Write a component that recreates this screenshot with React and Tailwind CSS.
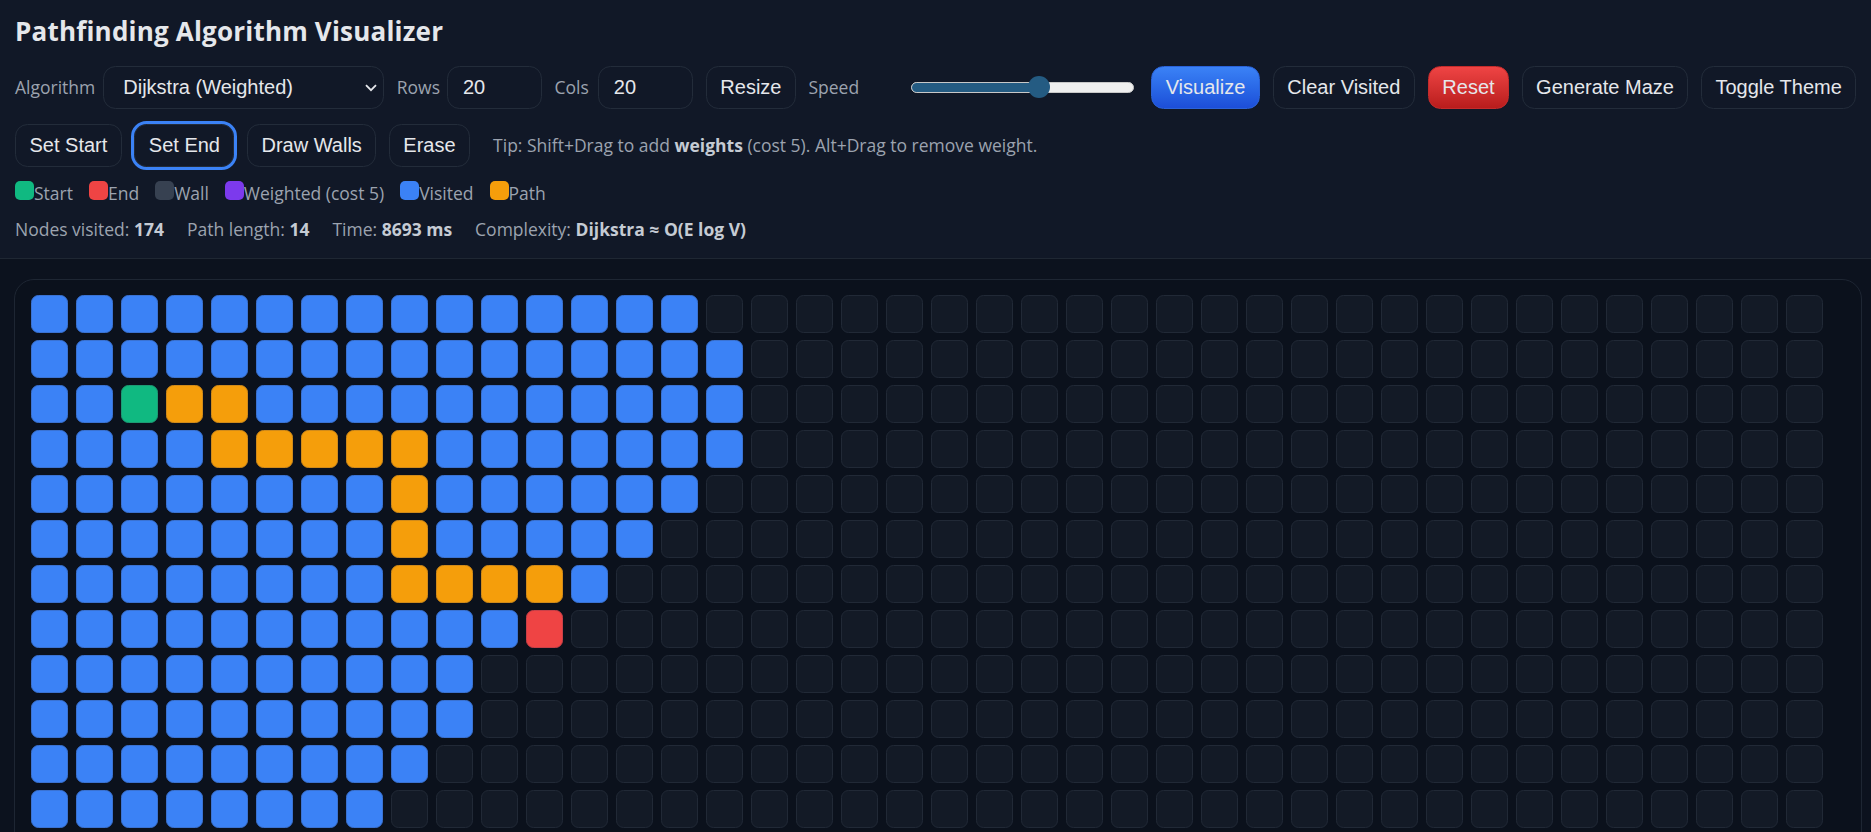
import React from 'react';

const COLS = 40;
const ROWS = 20;
// how far the visited flood reached in each row (exclusive)
const VISITED_TO = [15, 16, 16, 16, 15, 14, 13, 12, 10, 10, 9, 8, 7, 6, 6, 5, 4, 3, 2, 1];
const START = '2-2';
const END = '7-11';
const PATH = new Set([
  '2-3', '2-4', '3-4', '3-5', '3-6', '3-7', '3-8',
  '4-8', '5-8', '6-8', '6-9', '6-10', '6-11',
]);

const sans = "font-['Open_Sans','Noto_Sans',sans-serif]";
const arial = "font-['Liberation_Sans',Arial,sans-serif]";

function cellClass(r, c) {
  const k = `${r}-${c}`;
  if (k === START) return 'bg-[#10b981] border-[#1d9b74]';
  if (k === END) return 'bg-[#ef4444] border-[#c94048]';
  if (PATH.has(k)) return 'bg-[#f59e0b] border-[#d08a1a]';
  if (c < VISITED_TO[r]) return 'bg-[#3b82f6] border-[#3a72d2]';
  return 'bg-[#131a26] border-[#212936]';
}

function Btn({ children, className = '' }) {
  return (
    <button
      className={`h-[42.5px] shrink-0 rounded-[12.5px] border px-[13.5px] text-[20px] leading-[23px] text-[#e5e7eb] ${arial} ${className}`}
    >
      {children}
    </button>
  );
}

const plain = 'border-[#232c3a] bg-[#111827]';

function Label({ children }) {
  return <span className="shrink-0 text-[17.5px] text-[#9ca3af]">{children}</span>;
}

function NumInput({ value }) {
  return (
    <div
      className={`flex h-[42.5px] w-[95px] shrink-0 items-center rounded-[12.5px] border border-[#232c3a] bg-[#111827] pl-[15px] text-[20px] text-[#e5e7eb] ${arial}`}
    >
      {value}
    </div>
  );
}

function Legend() {
  const items = [
    ['Start', 'bg-[#10b981]'],
    ['End', 'bg-[#ef4444]'],
    ['Wall', 'bg-[#374151]'],
    ['Weighted (cost 5)', 'bg-[#7c3aed]'],
    ['Visited', 'bg-[#3b82f6]'],
    ['Path', 'bg-[#f59e0b]'],
  ];
  return (
    <div className="mt-[14.5px] flex items-baseline gap-[16px] text-[17.5px] leading-[24px] text-[#9ca3af]">
      {items.map(([label, color]) => (
        <span key={label}>
          <span className={`inline-block h-[19px] w-[19px] rounded-[5px] ${color}`} />
          {label}
        </span>
      ))}
    </div>
  );
}

function Stats() {
  return (
    <div className="mt-[12px] flex gap-[23px] text-[17.5px] leading-[24px] text-[#9ca3af]">
      <span>Nodes visited: <b className="text-[#c5cbd4]">174</b></span>
      <span>Path length: <b className="text-[#c5cbd4]">14</b></span>
      <span>Time: <b className="text-[#c5cbd4]">8693 ms</b></span>
      <span>Complexity: <b className="text-[#c5cbd4]">Dijkstra ≈ O(E log V)</b></span>
    </div>
  );
}

function Grid() {
  const cells = [];
  for (let r = 0; r < ROWS; r++) {
    for (let c = 0; c < COLS; c++) {
      cells.push(
        <div key={`${r}-${c}`} className={`h-[37.5px] w-[37.5px] rounded-[7.5px] border ${cellClass(r, c)}`} />
      );
    }
  }
  return <div className="grid grid-cols-[repeat(40,37.5px)] gap-[7.5px]">{cells}</div>;
}

export default function App() {
  return (
    <div className={`h-[832px] overflow-hidden bg-[#0c121e] ${sans}`}>
      <header className="border-b border-[#1f2733] bg-[#111827] px-[15px] pb-[16.5px] pt-[15px]">
        <h1 className="text-[26px] font-bold leading-[32px] tracking-[0.2px] text-[#e5e7eb]">Pathfinding Algorithm Visualizer</h1>

        <div className="mt-[19px] flex items-center">
          <Label>Algorithm</Label>
          <div className="relative ml-[8px] flex h-[42.5px] w-[281px] shrink-0 items-center rounded-[12.5px] border border-[#232c3a] bg-[#111827]">
            <span className={`pl-[19px] text-[20px] text-[#e5e7eb] ${arial}`}>Dijkstra (Weighted)</span>
            <svg className="absolute right-[6px] top-[17px]" width="12" height="8" viewBox="0 0 12 8" fill="none">
              <path d="M1 1.2 6 6.2 11 1.2" stroke="#e5e7eb" strokeWidth="1.8" />
            </svg>
          </div>
          <div className="ml-[12.5px]"><Label>Rows</Label></div>
          <div className="ml-[7px]"><NumInput value="20" /></div>
          <div className="ml-[12.5px]"><Label>Cols</Label></div>
          <div className="ml-[9px]"><NumInput value="20" /></div>
          <Btn className={`ml-[13px] ${plain}`}>Resize</Btn>
          <div className="ml-[12.5px]"><Label>Speed</Label></div>
          <div className="relative ml-[52px] flex h-[22px] w-[223px] shrink-0 items-center">
            <div className="flex h-[11.5px] w-full overflow-hidden rounded-full border border-[#c8c8c8] bg-[#efefef]">
              <div className="h-full w-[128px] bg-[#245b82]" />
            </div>
            <div className="absolute left-[117px] top-0 h-[22px] w-[22px] rounded-full bg-[#245b82]" />
          </div>
          <Btn className="ml-[17px] border-[#2a62d8] bg-linear-to-b from-[#3b82f6] to-[#1d4ed8]">Visualize</Btn>
          <Btn className={`ml-[13px] ${plain}`}>Clear Visited</Btn>
          <Btn className="ml-[13px] border-[#c42b2b] bg-linear-to-b from-[#ef4444] to-[#b91c1c]">Reset</Btn>
          <Btn className={`ml-[12.5px] ${plain}`}>Generate Maze</Btn>
          <Btn className={`ml-[12.5px] ${plain}`}>Toggle Theme</Btn>
        </div>

        <div className="mt-[15.5px] flex items-center gap-[12.5px]">
          <Btn className={plain}>Set Start</Btn>
          <Btn className={`${plain} outline-3 outline-[#3b82f6]`}>Set End</Btn>
          <Btn className={plain}>Draw Walls</Btn>
          <Btn className={plain}>Erase</Btn>
          <span className="ml-[10.5px] text-[17.5px] text-[#9ca3af]">
            Tip: Shift+Drag to add <b className="text-[#c5cbd4]">weights</b> (cost 5). Alt+Drag to remove weight.
          </span>
        </div>

        <Legend />
        <Stats />
      </header>

      <main className="pl-[14px] pt-[20px]">
        <div className="w-[1848px] rounded-[20px] border border-[#1e2633] bg-[#0b111c] pl-[15.5px] pt-[15.5px] pb-[16px]">
          <Grid />
        </div>
      </main>
    </div>
  );
}
